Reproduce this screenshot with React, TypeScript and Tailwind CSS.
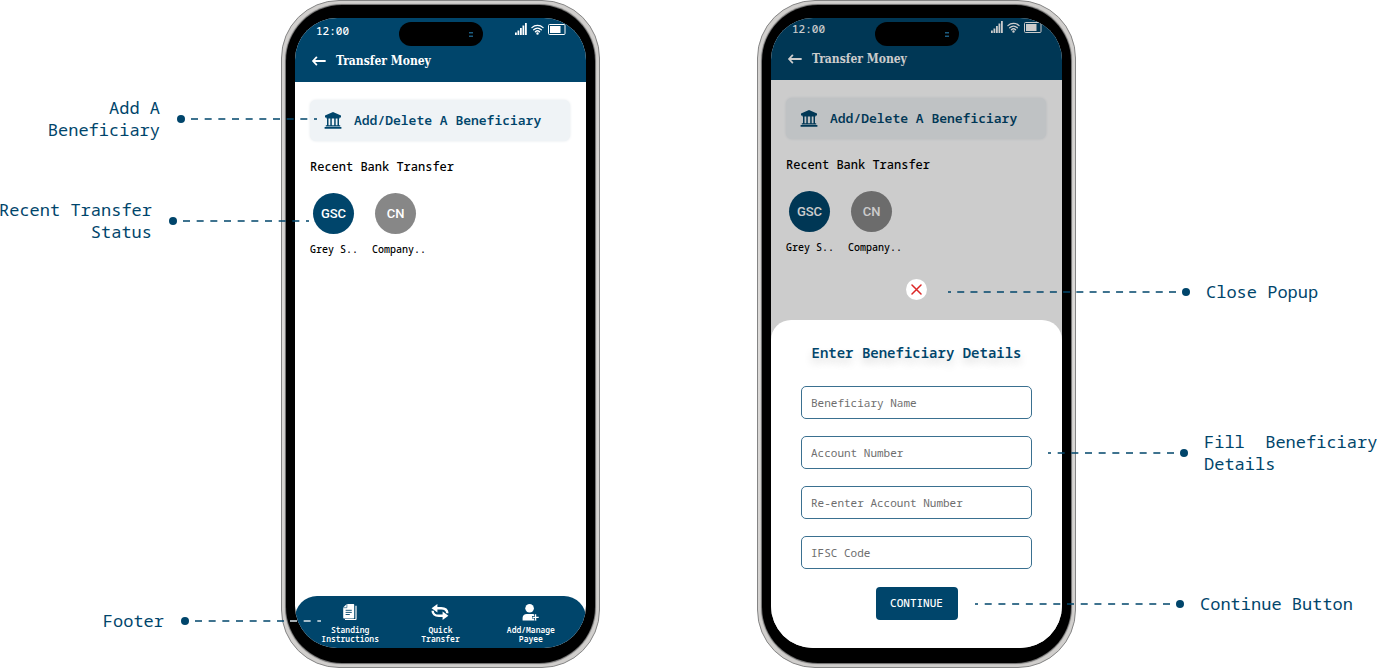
import React from 'react';

type HeaderProps = { className: string };
type CalloutProps = { children: React.ReactNode; className?: string; length: number; onDark?: number };
type PhoneProps = { children: React.ReactNode };

const SignalIcon = () => (
  <svg width="12" height="12" viewBox="0 0 12 12" fill="currentColor">
    <path d="M0 9.5h1.8V12H0zM2.5 7.5h1.8V12H2.5zM5 5h1.8v7H5zM7.5 2.5h1.8V12H7.500zM10 0h1.8v12H10z" />
  </svg>
);

const WifiIcon = () => (
  <svg width="13" height="11" viewBox="0 0 13 11" fill="none" stroke="currentColor" strokeWidth="1.3" strokeLinecap="round">
    <path d="M.9 3.6a8.2 8.2 0 0 1 11.2 0M2.7 5.7a5.6 5.6 0 0 1 7.6 0M4.4 7.7a3.1 3.1 0 0 1 4.2 0" />
    <circle cx="6.5" cy="9.5" r=".6" fill="currentColor" />
  </svg>
);

const BatteryIcon = () => (
  <svg width="18" height="11" viewBox="0 0 18 11" fill="none">
    <rect x=".5" y=".5" width="16.5" height="10" rx="1" stroke="currentColor" />
    <path d="M2 2h10.5v7H2z" fill="currentColor" />
  </svg>
);

const BackIcon = () => (
  <svg width="14" height="10" viewBox="0 0 14 10" fill="none" stroke="currentColor" strokeWidth="1.8" strokeLinecap="round" strokeLinejoin="round">
    <path d="M13 5H1M4.4 1.4 1 5l3.4 3.6" />
  </svg>
);

const BankIcon = () => (
  <svg width="18" height="17" viewBox="0 0 18 17" fill="currentColor">
    <path d="M9 0l8 3.600v1.800H1V3.600zM2.400 5.400h13.200v1.200H2.400zM3 6.600h1.500v7H3zM6.300 6.600h1.500v7H6.300zM10.200 6.600h1.500v7h-1.500zM13.500 6.600H15v7h-1.500zM1.800 13.200h14.400v1.200H1.800zM.6 15.100h16.800v1.700H.6z" />
  </svg>
);

const DocumentsIcon = () => (
  <svg width="16" height="16" viewBox="0 0 16 16" fill="none">
    <path d="M4.800 0h6.400c.6 0 1 .4 1 1v12.400c0 .6-.4 1-1 1H2.200c-.6 0-1-.4-1-1V3.600z" fill="white" />
    <path d="M14 1.800v13c0 .5-.3.800-.8.800H3" stroke="white" strokeWidth="1.200" />
    <path d="M4.900 0v3.700H1.200" stroke="#00456b" strokeWidth=".6" />
    <path d="M3.600 6.300h6.200M3.600 8.400h6.200M3.600 10.500h4.200" stroke="#00456b" strokeWidth=".9" />
  </svg>
);

const TransferIcon = () => (
  <svg width="18" height="16" viewBox="0 0 18 16" fill="none" stroke="white" strokeWidth="2.400">
    <path d="M5 4.200h5.200c3.600 0 6 1.600 6.200 5" />
    <path d="M13 11.800H7.800c-3.600 0-6-1.600-6.200-5" />
    <path d="M.6 4.300 6.400 0v8.400zM17.400 11.700 11.600 7.600V16z" fill="white" stroke="none" />
  </svg>
);

const PayeeIcon = () => (
  <svg width="18" height="17" viewBox="0 0 18 17" fill="none">
    <circle cx="7.600" cy="4.300" r="4.300" fill="white" />
    <path d="M.6 16.600v-2.700c0-2.400 1.800-4 4.200-4h5.600c2.400 0 4.200 1.600 4.200 4v2.700z" fill="white" />
    <path d="M13.600 9.800v7M10 13.300h7.400" stroke="#00456b" strokeWidth="2.600" />
    <path d="M13.600 10.200v6.200M10.500 13.300h6.200" stroke="white" strokeWidth="1.200" />
  </svg>
);

const CloseIcon = () => (
  <svg width="11" height="11" viewBox="0 0 11 11" stroke="#dc2626" strokeWidth="1.5" strokeLinecap="round">
    <path d="m1 1 9 9M10 1l-9 9" />
  </svg>
);

const navItems: { id: number; lines: [string, string]; icon: React.ReactNode }[] = [
  { id: 1, lines: ['Standing', 'Instructions'], icon: <DocumentsIcon /> },
  { id: 2, lines: ['Quick', 'Transfer'], icon: <TransferIcon /> },
  { id: 3, lines: ['Add/Manage', 'Payee'], icon: <PayeeIcon /> },
];

const recents = [
  { id: 1, initials: 'GSC', name: 'Grey S..', color: 'bg-[#00456b]' },
  { id: 2, initials: 'CN', name: 'Company..', color: 'bg-[#878787]' },
];

const fields = [
  { id: 'name', label: 'Beneficiary Name' },
  { id: 'account', label: 'Account Number' },
  { id: 'reaccount', label: 'Re-enter Account Number' },
  { id: 'ifsc', label: 'IFSC Code' },
];

function Phone({ children }: PhoneProps) {
  return (
    <div className="rounded-[58px] border border-[#858585] bg-linear-to-b from-[#d0cecc] via-[#dddbd9] to-[#d0cecc] p-1">
      <div className="rounded-[56px] bg-black px-[9px] pt-[13px] pb-[15px] shadow-[0_0_1px_1px_#6b6b6b]">
        <div className="relative h-[630px] overflow-hidden rounded-[42px] bg-white">
          {children}
          <div className="absolute top-1 left-1/2 flex h-6 w-[84px] -translate-x-1/2 items-center justify-end rounded-full bg-black pr-[10px]">
            <svg width="4" height="5" viewBox="0 0 4 5" fill="#1d5c80">
              <path d="M0 0h4v1.500H0zM0 3.500h4V5H0z" />
            </svg>
          </div>
        </div>
      </div>
    </div>
  );
}

function Header({ className }: HeaderProps) {
  return (
    <header className={`bg-[#00456b] pr-5 pb-[11px] text-white ${className}`}>
      <div className="flex h-5 items-center justify-between pl-[21px]">
        <span className="text-[11px] font-medium">12:00</span>
        <div className="flex items-center gap-1 pb-1">
          <SignalIcon />
          <WifiIcon />
          <BatteryIcon />
        </div>
      </div>
      <div className="mt-[10px] flex h-5 items-center gap-[10px] pl-[17px]">
        <button type="button" aria-label="Back">
          <BackIcon />
        </button>
        <h1 className="font-['DejaVu_Serif_Condensed','DejaVu_Serif',serif] text-[12px] font-bold">Transfer Money</h1>
      </div>
    </header>
  );
}

function TransferHome() {
  return (
    <div className="pt-[18px] pr-4 pl-[15px]">
      <button type="button" className="flex h-[41px] w-full items-center gap-3 rounded-md bg-[#eff3f6] pl-[14px] text-[#00456b] shadow-[0_0_3px_#e3e8ec]">
        <BankIcon />
        <span className="text-[13px] font-semibold">Add/Delete A Beneficiary</span>
      </button>
      <h2 className="mt-[18px] text-[12px] leading-4 font-medium text-black">Recent Bank Transfer</h2>
      <ul className="mt-[18px] flex">
        {recents.map((el) => (
          <li className="w-[62px]" key={el.id}>
            <div className={`ml-[3px] flex size-[41px] items-center justify-center rounded-full font-['Roboto',sans-serif] text-[13px] font-medium text-white ${el.color}`}>
              {el.initials}
            </div>
            <p className="mt-[7px] text-[10px] leading-4 font-medium whitespace-nowrap text-black">{el.name}</p>
          </li>
        ))}
      </ul>
    </div>
  );
}

function BottomNav() {
  return (
    <nav className="absolute inset-x-0 bottom-0 grid grid-cols-3 rounded-t-[22px] bg-[#00456b] px-[10px] pt-2 pb-[5px]">
      {navItems.map((el) => (
        <a href="#" className="flex flex-col items-center text-white" key={el.id}>
          <span className="flex h-4 items-center">{el.icon}</span>
          <span className="mt-[5px] text-center text-[8px] leading-[9px] font-semibold">
            {el.lines[0]}
            <br />
            {el.lines[1]}
          </span>
        </a>
      ))}
    </nav>
  );
}

function BeneficiaryPopup() {
  return (
    <div className="absolute inset-0 flex flex-col items-center justify-end bg-black/20">
      <button type="button" aria-label="Close" className="mb-5 flex size-[21px] items-center justify-center rounded-full bg-white">
        <CloseIcon />
      </button>
      <form className="flex w-full flex-col items-center rounded-t-[20px] bg-white px-[30px] pt-[23px] pb-7">
        <h2 className="mb-[23px] text-[14px] leading-5 font-semibold text-[#00456b] [text-shadow:0_5px_8px_rgba(0,0,0,0.18)]">
          Enter Beneficiary Details
        </h2>
        <div className="flex w-full flex-col gap-[17px]">
          {fields.map((el) => (
            <input
              key={el.id}
              id={el.id}
              type="text"
              aria-label={el.label}
              placeholder={el.label}
              className="h-[33px] w-full rounded-[5px] border border-[#3a7090] bg-white px-[9px] text-[11px] text-black placeholder:text-[#6e6e6e]"
            />
          ))}
        </div>
        <button type="button" className="mt-[18px] h-[33px] w-[82px] rounded-[4px] bg-[#00456b] text-[11px] font-medium text-white">
          CONTINUE
        </button>
      </form>
    </div>
  );
}

// 7px dashes, spaced so that the far end is always a short one
function dashes(length: number) {
  const span = length - 3;
  return `7 ${span / Math.round(span / 13.5) - 7}`;
}

function LeftCallout({ children, className = '', length, onDark = 0 }: CalloutProps) {
  return (
    <div className={`flex items-center justify-end text-right ${className}`}>
      <p className="shrink-0 whitespace-nowrap">{children}</p>
      <span className="ml-[17px] size-2 shrink-0 rounded-full bg-[#00456b]" />
      <svg className="ml-[6px] shrink-0" width={length} height="2" strokeWidth="1.5" strokeDasharray={dashes(length)}>
        <line x1="0" y1="1" x2={length - onDark} y2="1" stroke="#00456b" />
        {onDark > 0 && <line x1={length - onDark} y1="1" x2={length} y2="1" stroke="#dce6ec" />}
      </svg>
    </div>
  );
}

function RightCallout({ children, className = '', length }: CalloutProps) {
  return (
    <div className={`flex items-center ${className}`}>
      <svg className="mr-[6px] shrink-0" width={length} height="2" strokeWidth="1.5" strokeDasharray={dashes(length)}>
        <line x1={length} y1="1" x2="0" y2="1" stroke="#00456b" />
      </svg>
      <span className="mr-4 size-2 shrink-0 rounded-full bg-[#00456b]" />
      <p className="shrink-0 whitespace-pre">{children}</p>
    </div>
  );
}

function App() {
  return (
    <main className="grid min-h-screen grid-cols-[281fr_319px_157fr_319px_301fr] items-start overflow-hidden bg-white font-['Noto_Sans_Mono','DejaVu_Sans_Mono',monospace]">
      <aside className="z-10 flex min-w-0 flex-col self-stretch pt-[97px] pb-9 text-[17px] leading-[22px] text-[#00456b]">
        <LeftCallout className="-mr-9" length={126}>
          Add A
          <br />
          Beneficiary
        </LeftCallout>
        <LeftCallout className="mt-[58px] -mr-7" length={126}>
          Recent Transfer
          <br />
          Status
        </LeftCallout>
        <LeftCallout className="mt-auto -mr-10" length={126} onDark={31}>
          Footer
        </LeftCallout>
      </aside>

      <Phone>
        <Header className="pt-[3px]" />
        <TransferHome />
        <BottomNav />
      </Phone>

      <div />

      <Phone>
        <Header className="pt-px" />
        <TransferHome />
        <BeneficiaryPopup />
      </Phone>

      <aside className="z-10 flex min-w-0 flex-col self-stretch pt-[281px] text-[17px] leading-[22px] text-[#00456b]">
        <RightCallout className="-ml-32" length={228}>
          Close Popup
        </RightCallout>
        <RightCallout className="mt-[128px] -ml-7" length={126}>
          {'Fill  Beneficiary\nDetails'}
        </RightCallout>
        <RightCallout className="mt-[118px] -ml-[101px]" length={195}>
          Continue Button
        </RightCallout>
      </aside>
    </main>
  );
}

export default App;
